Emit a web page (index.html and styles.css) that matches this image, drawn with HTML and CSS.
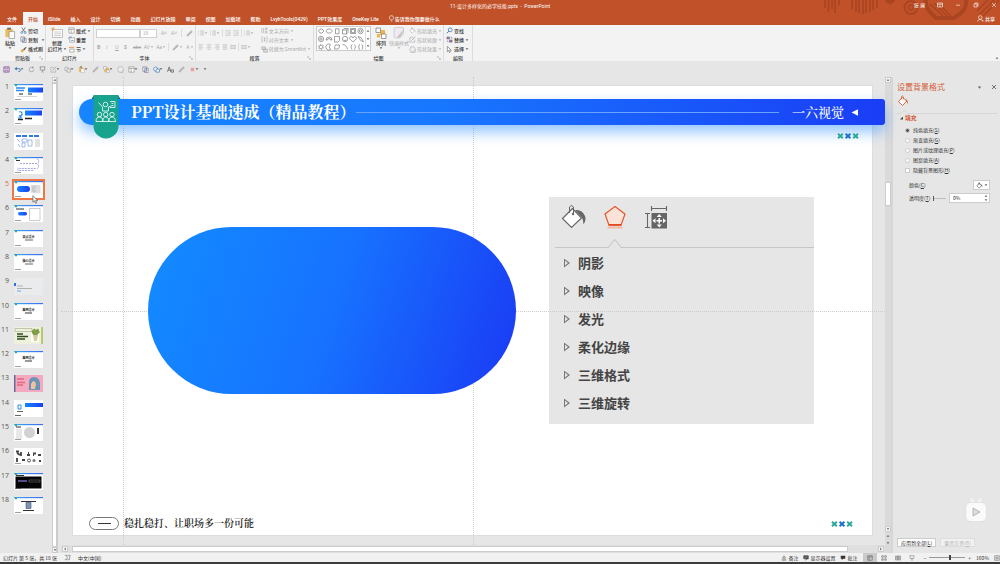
FILE: index.html
```html
<!DOCTYPE html>
<html lang="zh-CN">
<head>
<meta charset="utf-8">
<title>11-设计多样化的必学技能.pptx - PowerPoint</title>
<link rel="stylesheet" href="styles.css">
</head>
<body>
<svg class="defs" aria-hidden="true">
  <defs>
    <linearGradient id="blue" x1="0" y1="0" x2="1" y2="0"><stop offset="0" stop-color="#1685ff"/><stop offset="1" stop-color="#1a40f5"/></linearGradient>
    <linearGradient id="edge" x1="0" y1="0" x2="1" y2="0"><stop offset="0" stop-color="#3bb7b0"/><stop offset=".15" stop-color="#3a9bf5"/><stop offset="1" stop-color="#3f6fea"/></linearGradient>
    <symbol id="i-down" viewBox="0 0 4 4"><path d="M.6 1.2h2.8L2 2.9z" fill="currentColor"/></symbol>
    <symbol id="i-up" viewBox="0 0 4 4"><path d="M.6 2.8h2.8L2 1.1z" fill="currentColor"/></symbol>
    <symbol id="i-left" viewBox="0 0 4 4"><path d="M2.8.6v2.8L1.1 2z" fill="currentColor"/></symbol>
    <symbol id="i-right" viewBox="0 0 4 4"><path d="M1.2.6v2.8L2.9 2z" fill="currentColor"/></symbol>
    <symbol id="i-launch" viewBox="0 0 6 6"><path d="M1 3V1h2M2.5 2.5 5 5M5 3v2H3" fill="none" stroke="#888" stroke-width=".6"/></symbol>
    <symbol id="i-paste" viewBox="0 0 12 13"><path d="M1 2h8v9H1z" fill="#edbd62"/><path d="M3 .8h4v2H3z" fill="#666"/><path d="M5 5h6v7.5H5z" fill="#fff" stroke="#777" stroke-width=".6"/></symbol>
    <symbol id="i-cut" viewBox="0 0 8 8"><path d="M2 .5l3.2 5M6 .5l-3.2 5" stroke="#555" stroke-width=".8" fill="none"/><circle cx="2" cy="6.3" r="1.1" fill="none" stroke="#3c79b8" stroke-width=".8"/><circle cx="6" cy="6.3" r="1.1" fill="none" stroke="#3c79b8" stroke-width=".8"/></symbol>
    <symbol id="i-copy" viewBox="0 0 8 8"><path d="M1 1h4v5H1zM3 2.5h4v5H3z" fill="#fff" stroke="#557" stroke-width=".6"/><path d="M4 4h2M4 5.5h2" stroke="#3c79b8" stroke-width=".6"/></symbol>
    <symbol id="i-brush" viewBox="0 0 8 8"><path d="M1 4.5l2-1 1.5 2L3 7.5 1 6.5z" fill="#edaa4c"/><path d="M3.5 3.8L7 .8 7.4 1.6 4.8 5z" fill="#555"/></symbol>
    <symbol id="i-newslide" viewBox="0 0 12 12"><path d="M1.5 2.5h10v8h-10z" fill="#fff" stroke="#999" stroke-width=".6"/><path d="M3 5h7M3 6.8h7M3 8.6h7" stroke="#b9b9b9" stroke-width=".7"/><path d="M2 0v4M0 2h4" stroke="#e9a13b" stroke-width=".9"/></symbol>
    <symbol id="i-layout" viewBox="0 0 8 8"><path d="M1 1h6v6H1z" fill="#fff" stroke="#777" stroke-width=".6"/><path d="M1 2.8h6M3.6 2.8V7" stroke="#777" stroke-width=".6"/></symbol>
    <symbol id="i-reset" viewBox="0 0 8 8"><path d="M2 2h5.5v5H2z" fill="#fff" stroke="#777" stroke-width=".6"/><path d="M.5 3C1 1 3 .5 4.5 1.7M3.5 5h3" stroke="#3c79b8" stroke-width=".8" fill="none"/></symbol>
    <symbol id="i-section" viewBox="0 0 8 8"><path d="M1 1.5h6" stroke="#e08a3c" stroke-width="1"/><path d="M2 3.5h5v3.5H2z" fill="#fff" stroke="#777" stroke-width=".6"/></symbol>
    <symbol id="i-list" viewBox="0 0 8 8"><path d="M3 1.5h5M3 4h5M3 6.5h5M.3 1.5h1M.3 4h1M.3 6.5h1" stroke="#aaa" stroke-width=".8"/></symbol>
    <symbol id="i-align" viewBox="0 0 8 8"><path d="M1 1h6M1 3h4M1 5h6M1 7h4" stroke="#aaa" stroke-width=".7"/></symbol>
    <symbol id="i-center" viewBox="0 0 8 8"><path d="M1 1h6M2 3h4M1 5h6M2 7h4" stroke="#aaa" stroke-width=".7"/></symbol>
    <symbol id="i-ralign" viewBox="0 0 8 8"><path d="M1 1h6M3 3h4M1 5h6M3 7h4" stroke="#aaa" stroke-width=".7"/></symbol>
    <symbol id="i-just" viewBox="0 0 8 8"><path d="M1 1h6M1 3h6M1 5h6M1 7h6" stroke="#aaa" stroke-width=".7"/></symbol>
    <symbol id="i-dist" viewBox="0 0 8 8"><path d="M1 1v6M7 1v6M1.5 2h5M1.5 4h5M1.5 6h5" stroke="#aaa" stroke-width=".7"/></symbol>
    <symbol id="i-indent" viewBox="0 0 8 8"><path d="M.5 1h7M4 3h3.500M4 5h3.500M.5 7h7M.5 4h2.600" stroke="#aaa" stroke-width=".7"/></symbol>
    <symbol id="i-textdir" viewBox="0 0 8 8"><path d="M1 1v6M3 1v6M5 1h2v2H5zM5 5h2v2H5z" stroke="#aaa" stroke-width=".7" fill="none"/></symbol>
    <symbol id="i-textalign" viewBox="0 0 8 8"><path d="M2 1H1v6h1M6 1h1v6H6M4 1.500v5M3 3h2M3 5h2" stroke="#aaa" stroke-width=".7" fill="none"/></symbol>
    <symbol id="i-smart" viewBox="0 0 8 8"><path d="M1 1h4v3H1zM3 3.500h4.500V7H3z" stroke="#aaa" stroke-width=".8" fill="#ddd"/></symbol>
    <symbol id="i-arrange" viewBox="0 0 12 12"><path d="M5 3h5v5H5z" fill="#f0b54e"/><path d="M1 1h4.500v4.500H1zM6.500 7H11v4.500H6.500z" fill="#fff" stroke="#777" stroke-width=".7"/><path d="M2 7h3v3.500H2z" fill="#f0b54e"/></symbol>
    <symbol id="i-quick" viewBox="0 0 12 12"><path d="M1 2q0-1.500 1.500-1.500H9q1.500 0 1.500 1.500V7L7 11H2.500Q1 11 1 9.500z" fill="#eee9f2" stroke="#bbb" stroke-width=".6"/><path d="M11.500 2L6 8l-2 3 3.500-1.500z" fill="#bbb"/></symbol>
    <symbol id="i-bucket" viewBox="0 0 8 8"><path d="M3.500 1.500L1 4.500 3.700 7 6.500 4z" fill="#fff" stroke="currentColor" stroke-width=".6"/><path d="M3 3V1q.7-1 1.200 0v2" fill="none" stroke="currentColor" stroke-width=".5"/><path d="M5.500 2.700q2 .5 1.800 3.500L6.300 4z" fill="currentColor"/></symbol>
    <symbol id="i-outline" viewBox="0 0 8 8"><path d="M6.500 4v3H1V1.500h4" fill="none" stroke="#aaa" stroke-width=".7"/><path d="M3 5L7.300.8" stroke="#aaa" stroke-width="1"/></symbol>
    <symbol id="i-effect" viewBox="0 0 8 8"><path d="M2 1h4l1.300 3L5 7H2L.8 4z" fill="#eee" stroke="#aaa" stroke-width=".7"/><path d="M3 7.500h4L7.800 4" fill="none" stroke="#aaa" stroke-width=".6"/></symbol>
    <symbol id="i-find" viewBox="0 0 8 8"><circle cx="4.800" cy="3.200" r="2.200" fill="none" stroke="#3c79b8" stroke-width=".9"/><path d="M3.200 4.800L1 7.200" stroke="#3c79b8" stroke-width="1.100"/></symbol>
    <symbol id="i-replace" viewBox="0 0 8 8"><path d="M1 1h3v2.500H1zM4 4.500h3V7H4z" fill="#a97ab8" stroke="#555" stroke-width=".5"/><path d="M5 1.500h1.800v2M1.500 5v1.500H3" stroke="#3c79b8" stroke-width=".6" fill="none"/></symbol>
    <symbol id="i-cursor" viewBox="0 0 8 10"><path d="M1 .6v7.400l1.800-1.600 1.200 2.900 1.300-.6-1.200-2.700h2.400z" fill="#fff" stroke="#444" stroke-width=".7"/></symbol>
    <symbol id="i-save" viewBox="0 0 8 8"><path d="M1 1h6v6H1z" fill="none" stroke="#8a4f9e" stroke-width=".9"/><path d="M2.500 1v2.200h3V1M2.500 7V5h3v2" fill="none" stroke="#8a4f9e" stroke-width=".7"/></symbol>
    <symbol id="i-undo" viewBox="0 0 8 8"><path d="M2 3h3.500q1.700 0 1.700 1.800T5 6.500" fill="none" stroke="#3c79b8" stroke-width="1.100"/><path d="M3.200.8v4.400L.6 3z" fill="#3c79b8"/></symbol>
    <symbol id="i-redo" viewBox="0 0 8 8"><path d="M6.500 4A2.600 2.600 0 1 1 5 1.700" fill="none" stroke="#999" stroke-width=".8"/><path d="M4.500.3L7 1.600 4.800 3z" fill="#999"/></symbol>
    <symbol id="i-show" viewBox="0 0 8 8"><path d="M.8 1h6.400M1.500 1v3.700h5V1M4 4.700V6M2.600 7.300L4 6l1.400 1.300" fill="none" stroke="#777" stroke-width=".7"/></symbol>
    <symbol id="i-shapes" viewBox="0 0 8 8"><circle cx="3" cy="3.500" r="2.300" fill="none" stroke="#999" stroke-width=".7"/><path d="M3.500 3.500h3.800V7H3.500z" fill="#eee" stroke="#999" stroke-width=".7"/></symbol>
    <symbol id="i-shapesb" viewBox="0 0 8 8"><circle cx="3" cy="3.500" r="2.300" fill="#fff" stroke="#3c79b8" stroke-width=".8"/><path d="M3.500 3.500h3.800V7H3.500z" fill="#fff" stroke="#3c79b8" stroke-width=".8"/></symbol>
    <symbol id="i-pen" viewBox="0 0 8 8"><path d="M1 7l.7-2L6 .8 7.300 2 3 6.300z" fill="#bbb" stroke="#999" stroke-width=".5"/></symbol>
    <symbol id="i-people" viewBox="0 0 8 8"><circle cx="3.700" cy="2.800" r="2" fill="none" stroke="#fff" stroke-width=".7"/><path d="M.7 7.500Q1 5 3.700 5t3 2.500M5.500 6.500h2" fill="none" stroke="#fff" stroke-width=".7"/></symbol>
    <symbol id="i-xxx" viewBox="0 0 22 6"><g fill="none" stroke-width="1.900"><path d="M1 .7l4.800 4.600M5.800.7L1 5.300M16.200.7L21 5.300M21 .7l-4.800 4.600" stroke="#2aa79a"/><path d="M8.600.7l4.800 4.600M13.400.7L8.600 5.300" stroke="#1b6fd6"/></g></symbol>
    <symbol id="t-head" viewBox="0 0 29 17"><path d="M0 0h29v1.200H0z" fill="url(#edge)"/><path d="M1 .5h2v1.800H1z" fill="#2aa79a"/><path d="M1 15.500h6" stroke="#777" stroke-width=".7"/></symbol>
  </defs>
</svg>

<div class="app">
  <header class="top">
    <svg class="deco" viewBox="0 0 180 25" aria-hidden="true">
      <g stroke="#a94521" fill="none">
        <path d="M5 0v8M8.500 0v12M12 0v9M15 0v13M19 0v5M32 0v9M36 0v12M39 0v13M43 0v14M46 0v13M50 0v12M53 0v10M57 0v8" stroke-width="1.700"/>
        <circle cx="91" cy="7.500" r="6.500" stroke-width="2"/><circle cx="91" cy="7.500" r="2.500" stroke-width="1.500"/>
        <path d="M106 0q-1 8 6 14l4 4h18l7-5q6-6 5-13" stroke-width="4"/>
        <path d="M110 4l15 14M114 3l14 14M118 3l13 13M160 14l14-14M163 16l16-16M157 11l11-11" stroke-width="1.500"/>
      </g>
      <circle cx="70" cy="-1" r="5" fill="#a94521"/>
    </svg>
    <div class="titlebar">
      <span class="doc">11-设计多样化的必学技能.pptx&nbsp; -&nbsp; PowerPoint</span>
      <div class="winctl">
        <span>张 澜</span>
        <button aria-label="功能区显示选项"><svg viewBox="0 0 6 6"><path d="M.5 1h5v4h-5zM.5 2.200h5M3 2.500V5" fill="none" stroke="#fff" stroke-width=".6"/></svg></button>
        <button aria-label="最小化"><svg viewBox="0 0 6 6"><path d="M1 3.200h4" stroke="#fff" stroke-width=".6"/></svg></button>
        <button aria-label="还原"><svg viewBox="0 0 6 6"><path d="M1 2h3v3H1zM2 2V1h3v3H4" fill="none" stroke="#fff" stroke-width=".6"/></svg></button>
        <button aria-label="关闭"><svg viewBox="0 0 6 6"><path d="M1 1l4 4M5 1L1 5" stroke="#fff" stroke-width=".6"/></svg></button>
      </div>
    </div>
    <nav class="tabs">
      <button>文件</button><button class="on">开始</button><button>iSlide</button><button>插入</button><button>设计</button><button>切换</button><button>动画</button><button>幻灯片放映</button><button>审阅</button><button>视图</button><button>加载项</button><button>帮助</button><button>LvyhTools(0429)</button><button>PPT效果库</button><button>OneKey Lite</button>
      <button class="tell"><svg class="ic" viewBox="0 0 8 8"><path d="M3 5.500Q1.500 4.300 1.700 3a2.300 2.300 0 0 1 4.600 0Q6.500 4.300 5 5.500zM3 7h2" fill="none" stroke="#fff" stroke-width=".7"/></svg>告诉我你想要做什么</button>
      <button class="share"><svg class="ic"><use href="#i-people"/></svg>共享</button>
    </nav>
  </header>

  <section class="ribbon" aria-label="功能区">
    <div class="group g-clip">
      <div class="body">
        <button class="big"><svg><use href="#i-paste"/></svg><span>粘贴</span><svg class="dd"><use href="#i-down"/></svg></button>
        <div class="stack">
          <button><svg class="ic"><use href="#i-cut"/></svg>剪切</button>
          <button><svg class="ic"><use href="#i-copy"/></svg>复制<svg class="dd gap"><use href="#i-down"/></svg></button>
          <button><svg class="ic"><use href="#i-brush"/></svg>格式刷</button>
        </div>
      </div>
      <div class="cap">剪贴板<svg><use href="#i-launch"/></svg></div>
    </div>
    <div class="group g-slides">
      <div class="body">
        <button class="big"><svg><use href="#i-newslide"/></svg><span>新建</span><span>幻灯片<svg class="dd"><use href="#i-down"/></svg></span></button>
        <div class="stack">
          <button><svg class="ic"><use href="#i-layout"/></svg>版式<svg class="dd"><use href="#i-down"/></svg></button>
          <button><svg class="ic"><use href="#i-reset"/></svg>重置</button>
          <button><svg class="ic"><use href="#i-section"/></svg>节<svg class="dd"><use href="#i-down"/></svg></button>
        </div>
      </div>
      <div class="cap">幻灯片</div>
    </div>
    <div class="group g-font off">
      <div class="rows">
        <div class="row">
          <select class="fname" aria-label="字体"><option></option></select><select class="fsize" aria-label="字号"><option>18</option></select>
          <button class="lat">A˄</button><button class="lat">A˅</button><span class="sep"></span><button aria-label="清除格式"><svg class="ic"><use href="#i-pen"/></svg></button>
        </div>
        <div class="row wide">
          <button class="lat"><b>B</b></button><button class="lat"><i>I</i></button><button class="lat"><u>U</u></button><button class="lat"><b>S</b></button><button class="lat"><s>abc</s></button><button class="lat">AV<svg class="dd"><use href="#i-down"/></svg></button><button class="lat">Aa<svg class="dd"><use href="#i-down"/></svg></button><span class="sep"></span><button aria-label="突出显示"><svg class="ic"><use href="#i-pen"/></svg><svg class="dd"><use href="#i-down"/></svg></button><button class="lat">A<svg class="dd"><use href="#i-down"/></svg></button>
        </div>
      </div>
      <div class="cap">字体<svg><use href="#i-launch"/></svg></div>
    </div>
    <div class="group g-para off">
      <div class="body">
        <div class="rows">
          <div class="row icons">
            <button aria-label="项目符号"><svg class="ic"><use href="#i-list"/></svg><svg class="dd"><use href="#i-down"/></svg></button><button aria-label="编号"><svg class="ic"><use href="#i-list"/></svg><svg class="dd"><use href="#i-down"/></svg></button><span class="sep"></span><button aria-label="减少缩进"><svg class="ic"><use href="#i-indent"/></svg></button><button aria-label="增加缩进"><svg class="ic"><use href="#i-indent"/></svg></button><span class="sep"></span><button aria-label="行距"><svg class="ic"><use href="#i-list"/></svg><svg class="dd"><use href="#i-down"/></svg></button>
          </div>
          <div class="row icons">
            <button aria-label="左对齐"><svg class="ic"><use href="#i-align"/></svg></button><button aria-label="居中"><svg class="ic"><use href="#i-center"/></svg></button><button aria-label="右对齐"><svg class="ic"><use href="#i-ralign"/></svg></button><button aria-label="两端对齐"><svg class="ic"><use href="#i-just"/></svg></button><button aria-label="分散对齐"><svg class="ic"><use href="#i-dist"/></svg></button><span class="sep"></span><button aria-label="分栏"><svg class="ic"><use href="#i-dist"/></svg><svg class="dd"><use href="#i-down"/></svg></button>
          </div>
        </div>
        <div class="stack">
          <button><svg class="ic"><use href="#i-textdir"/></svg>文字方向<svg class="dd"><use href="#i-down"/></svg></button>
          <button><svg class="ic"><use href="#i-textalign"/></svg>对齐文本<svg class="dd"><use href="#i-down"/></svg></button>
          <button><svg class="ic"><use href="#i-smart"/></svg>转换为 SmartArt<svg class="dd"><use href="#i-down"/></svg></button>
        </div>
      </div>
      <div class="cap">段落<svg><use href="#i-launch"/></svg></div>
    </div>
    <div class="group g-draw">
      <div class="body">
        <div class="gallery">
          <svg viewBox="0 0 48 24" aria-label="形状">
            <g fill="#fff" stroke="#666" stroke-width=".6">
              <path d="M3 2h2l2 2-2 2H3L1.500 4zM10.500 2h3L15.500 4l-2 2h-3L9 4zM18.500 1.800h3.500v5h-3.500zM25.500 3l1.500-1.500h4V5.500L29.500 7h-4zM25.500 3h4v4M29.500 3L31 1.500M33.500 1.500h5v5h-5zM34.500 2.500h3v3h-3z"/>
              <circle cx="43.500" cy="4" r="2.700"/><circle cx="43.500" cy="4" r="1.200"/>
              <circle cx="4" cy="12" r="2.700"/><circle cx="4" cy="12" r="1.200"/><path d="M9 13a3 3 0 0 1 6 0h-1.500a1.500 1.500 0 0 0-3 0zM17.500 9.500h5v4l-1.500 1.500h-3.500z"/><circle cx="28" cy="12" r="2.700"/><path d="M26.500 13q1.500 1.300 3 0"/><path d="M36 14.800q-6-4-1.500-5.300Q36 10 36 11q0-1 1.500-1.500 4.500 1.300-1.500 5.300zM41 9.500l3 1 2.500 4.300-3-1.500z"/>
              <circle cx="4" cy="20" r="1.800"/><circle cx="4" cy="20" r="2.800" fill="none" stroke-dasharray=".7 1"/><path d="M13.500 17.500a3 3 0 1 0 0 5 3.500 3.500 0 0 1 0-5zM18.500 18h4q0 4-1.500 4h-3.500q0-3 1-4z"/><path d="M25.500 17.500q4 0 5 5M35 17.500q-2 2.500 0 5M37.500 17.500q2 2.500 0 5M43 17.500q-1.500 0-1.200 2.500-.3 2.500 1.200 2.500M44.500 17.500q1.500 0 1.200 2.500.3 2.500-1.200 2.500" fill="none"/>
            </g>
          </svg>
          <div class="gbtn"><button aria-label="上"><svg class="dd"><use href="#i-up"/></svg></button><button aria-label="下"><svg class="dd"><use href="#i-down"/></svg></button><button aria-label="更多"><svg class="dd"><use href="#i-down"/></svg></button></div>
        </div>
        <button class="big"><svg><use href="#i-arrange"/></svg><span>排列</span><svg class="dd"><use href="#i-down"/></svg></button>
        <button class="big off"><svg><use href="#i-quick"/></svg><span>快速样式</span><svg class="dd"><use href="#i-down"/></svg></button>
        <div class="stack off">
          <button><svg class="ic"><use href="#i-bucket"/></svg>形状填充<svg class="dd"><use href="#i-down"/></svg></button>
          <button><svg class="ic"><use href="#i-outline"/></svg>形状轮廓<svg class="dd"><use href="#i-down"/></svg></button>
          <button><svg class="ic"><use href="#i-effect"/></svg>形状效果<svg class="dd"><use href="#i-down"/></svg></button>
        </div>
      </div>
      <div class="cap">绘图<svg><use href="#i-launch"/></svg></div>
    </div>
    <div class="group g-edit">
      <div class="body">
        <div class="stack">
          <button><svg class="ic"><use href="#i-find"/></svg>查找</button>
          <button><svg class="ic"><use href="#i-replace"/></svg>替换<svg class="dd"><use href="#i-down"/></svg></button>
          <button><svg class="ic"><use href="#i-cursor"/></svg>选择<svg class="dd"><use href="#i-down"/></svg></button>
        </div>
      </div>
      <div class="cap">编辑</div>
    </div>
    <button class="collapse" aria-label="折叠功能区"><svg class="dd"><use href="#i-up"/></svg></button>
  </section>

  <div class="qat">
    <button aria-label="保存"><svg class="ic"><use href="#i-save"/></svg></button>
    <button aria-label="撤消"><svg class="ic"><use href="#i-undo"/></svg><svg class="dd"><use href="#i-down"/></svg></button>
    <button aria-label="重复"><svg class="ic"><use href="#i-redo"/></svg></button>
    <button aria-label="放映"><svg class="ic"><use href="#i-show"/></svg></button>
    <button aria-label="对齐"><svg class="ic"><use href="#i-outline"/></svg><svg class="dd"><use href="#i-down"/></svg></button>
    <button aria-label="合并形状"><svg class="ic"><use href="#i-shapes"/></svg><svg class="dd"><use href="#i-down"/></svg></button>
    <button aria-label="粘贴"><svg class="ic"><use href="#i-paste"/></svg><svg class="dd"><use href="#i-down"/></svg></button>
    <button aria-label="格式刷"><svg class="ic"><use href="#i-pen"/></svg></button>
    <button aria-label="排列"><svg class="ic"><use href="#i-arrange"/></svg><svg class="dd"><use href="#i-down"/></svg></button>
    <button aria-label="组合"><svg class="ic"><use href="#i-effect"/></svg></button>
    <button aria-label="图片"><svg class="ic"><use href="#i-layout"/></svg><svg class="dd"><use href="#i-down"/></svg></button>
    <button aria-label="文本框"><svg class="ic"><use href="#i-copy"/></svg></button>
    <button aria-label="形状"><svg class="ic"><use href="#i-shapesb"/></svg><svg class="dd"><use href="#i-down"/></svg></button>
    <button aria-label="字体"><svg class="ic" viewBox="0 0 8 8"><path d="M.5 6.500L2.500 1l2 5.500M1.200 4.700h2.600M4.500 4.500h3v2.500h-3z" fill="none" stroke="#555" stroke-width=".8"/></svg></button>
    <button aria-label="取色器"><svg class="ic"><use href="#i-pen"/></svg></button>
    <button aria-label="颜色"><svg class="ic" viewBox="0 0 8 8"><path d="M2 2h4v4H2z" fill="#eaa0a0"/></svg><svg class="dd"><use href="#i-down"/></svg></button>
    <button aria-label="自定义"><svg class="dd"><use href="#i-down"/></svg></button>
  </div>

  <main class="work">
    <ol class="thumbs">
      <li><span>1</span><svg viewBox="0 0 29 17"><use href="#t-head"/><path d="M14 3.500h15v5H14z" fill="url(#blue)"/><path d="M2 4h9M2 6.500h8" stroke="#2c8bf0" stroke-width="1.500"/><path d="M5 10h4M14 10h4" stroke="#222" stroke-width="1.200"/><path d="M3 12.500h20" stroke="#bbb" stroke-width=".6"/></svg></li>
      <li><span>2</span><svg viewBox="0 0 29 17"><use href="#t-head"/><path d="M11 2.500h17v5H11z" fill="url(#blue)"/><path d="M5 4q3-1 3 2 0 2-3 2 3 1 2 2H4" fill="none" stroke="#2c8bf0" stroke-width="1.200"/><path d="M4 11.500h5M11 10.500h7" stroke="#222" stroke-width="1.500"/></svg></li>
      <li><span>3</span><svg viewBox="0 0 29 17"><path d="M2 3h5M8 3h5M15 3h4M20 3h5" stroke="#3577dd" stroke-width="2"/><path d="M3 6l3 3M8 6h5v3H8zM14 7h4v6h-4zM4 11l2 3M8 10h3v4H8z" stroke="#89a9e6" fill="none" stroke-width=".8"/><path d="M21 6h5v8h-5z" fill="#e2e2e2"/></svg></li>
      <li><span>4</span><svg viewBox="0 0 29 17"><use href="#t-head"/><path d="M2 3.500h4" stroke="#333"/><path d="M6 6.500h18q2-4-1-4M24 7.500q2 4-2 4H6q-3-1-2 2h16" fill="none" stroke="#9b9bd8" stroke-width=".9" stroke-dasharray="2 1"/></svg></li>
      <li class="cur"><span>5</span><svg viewBox="0 0 29 17"><use href="#t-head"/><rect x="3" y="5" width="13" height="6" rx="3" fill="url(#blue)"/><path d="M17 4h9.500v8H17z" fill="#ddd"/><path d="M18 6h4M18 8h3M18 10h4" stroke="#aaa" stroke-width=".7"/></svg><svg class="mouse"><use href="#i-cursor"/></svg></li>
      <li><span>6</span><svg viewBox="0 0 29 17"><use href="#t-head"/><path d="M2 4h8" stroke="#333"/><rect x="4" y="7" width="9" height="3.500" rx="1.700" fill="url(#blue)"/><path d="M15.500 3.500H26v12H15.500z" fill="none" stroke="#999" stroke-width=".5"/></svg></li>
      <li><span>7</span><svg viewBox="0 0 29 17"><use href="#t-head"/><text x="14.500" y="8">亮点设计</text><path d="M11 10h8" stroke="#666"/></svg></li>
      <li><span>8</span><svg viewBox="0 0 29 17"><use href="#t-head"/><text x="14.500" y="8">核心设计</text><path d="M11 10h8" stroke="#666"/></svg></li>
      <li><span>9</span><svg viewBox="0 0 29 17"><path d="M0 0h29v17H0z" fill="#e9ebed"/><path d="M0 5h2v3H0z" fill="#2c6de0"/><path d="M3 8h6M3 10.500h15" stroke="#999" stroke-width=".7"/><path d="M3 13h4" stroke="#2c8bf0" stroke-width=".7"/></svg></li>
      <li><span>10</span><svg viewBox="0 0 29 17"><use href="#t-head"/><text x="14.500" y="8">案例设计</text><path d="M11 10h7" stroke="#333"/></svg></li>
      <li><span>11</span><svg viewBox="0 0 29 17"><path d="M0 0h29v17H0z" fill="#eef2dd"/><path d="M1 1.500h17v3H1z" fill="none" stroke="#aab09a" stroke-width=".7"/><path d="M3 7h6M3 9.500h11M3 12h8" stroke="#344a22" stroke-width="1.300"/><path d="M17 6h8v9h-8z" fill="#fff"/><path d="M18 6q-1-3 1-3 1-3 3 0 3-3 3 1 2 1-1 3l-1 2h-3z" fill="#7f9e48"/><path d="M19 8h5l-1 6h-3z" fill="#d8c99a"/><path d="M27 0h2v17h-2z" fill="#b5c96c"/></svg></li>
      <li><span>12</span><svg viewBox="0 0 29 17"><use href="#t-head"/><text x="14.500" y="8">案例设计</text><path d="M11 10h7" stroke="#333"/></svg></li>
      <li><span>13</span><svg viewBox="0 0 29 17"><path d="M0 0h29v17H0z" fill="#f3a9bf"/><path d="M0 0h1.500v17H0z" fill="#666c99"/><path d="M3 4h7M3 7.500h8M3 10h6" stroke="#e36680" stroke-width="1.300"/><path d="M15 15V8q0-6 5-6t6 6v7z" fill="#6b93b8"/><path d="M17 9q3-6 5 0l-1 5h-4z" fill="#f0c49a"/></svg></li>
      <li><span>14</span><svg viewBox="0 0 29 17"><path d="M11 3h18v4H11z" fill="url(#blue)"/><path d="M4 5h3v4H4z" fill="none" stroke="#2c8bf0"/><path d="M3 11.500h6M1 15.500h6" stroke="#666"/></svg></li>
      <li><span>15</span><svg viewBox="0 0 29 17"><use href="#t-head"/><path d="M2 3h5" stroke="#333"/><path d="M2 5h6v10H2z" fill="#e8e8e8"/><circle cx="15.500" cy="8.500" r="5.500" fill="#d2d2d2"/><path d="M24 4v6" stroke="#333" stroke-width="2"/></svg></li>
      <li><span>16</span><svg viewBox="0 0 29 17"><path d="M2 3.500h3M3 5l3 2M7 4v4M13 7h3M14 5h1M19 5.500h3M19 7h1M24 7h3M3 10v4M8 12h3M25 13h2" stroke="#444" stroke-width="1.800"/><circle cx="15" cy="12.500" r="1.500" fill="none" stroke="#555"/><circle cx="20" cy="12.500" r="1.500" fill="#777"/><path d="M1 15.500h6" stroke="#777" stroke-width=".7"/></svg></li>
      <li><span>17</span><svg viewBox="0 0 29 17"><use href="#t-head"/><path d="M1.500 3.500h26v12h-26z" fill="#050505"/><path d="M2 2.500h8" stroke="#333"/><path d="M4 8h9" stroke="#8c7de0" stroke-width="1.200"/><path d="M15 7h11v2H15z" fill="none" stroke="#888" stroke-width=".5"/></svg></li>
      <li><span>18</span><svg viewBox="0 0 29 17"><use href="#t-head"/><path d="M7 4.500h15M9 13.500h11" stroke="#333"/><path d="M12 5.500h5v6h-5z" fill="#7f93b5" stroke="#42506e" stroke-width=".6"/></svg></li>
    </ol>
    <div class="vbar left"><button aria-label="上"><svg class="dd"><use href="#i-up"/></svg></button><i class="hold"></i><button aria-label="下"><svg class="dd"><use href="#i-down"/></svg></button></div>

    <div class="stage">
      <div class="canvas">
        <div class="slide">
          <div class="banner">
            <h1>PPT设计基础速成（精品教程）</h1>
            <span class="rule"></span>
            <span class="brand">一六视觉</span>
            <svg class="tri" viewBox="0 0 7 7"><path d="M7 .3v6.400L.5 3.500z" fill="#fff"/></svg>
          </div>
          <svg class="badge" viewBox="0 0 30 44" aria-hidden="true">
            <path d="M.5 4L3 .3h24L29.500 4z" fill="#0b6357"/>
            <path d="M2.500.3h25V31a12.500 12.500 0 0 1-25 0z" fill="#18a38f"/>
            <g fill="none" stroke="#fff" stroke-width=".8"><circle cx="14.500" cy="9.500" r="2.300"/><path d="M7.500 7.500l4 4.500v4h6v-4l3-1M19 6.500h5v6h-5M20.500 8.500h2M20.500 10.500h2"/><circle cx="8.500" cy="19.500" r="2.200"/><circle cx="14.700" cy="19.500" r="2.200"/><circle cx="21" cy="19.500" r="2.200"/><path d="M5 26.500q0-4.500 3.500-4.500t3.300 4.500q0-4.500 3-4.500t3 4.500q0-4.500 3.200-4.500t3.500 4.500z"/></g>
          </svg>
          <svg class="xxx one"><use href="#i-xxx"/></svg>
          <div class="pill"></div>
          <section class="shot">
            <div class="shot-tabs">
              <svg viewBox="0 0 26 26"><path d="M11.500 4.500L1.500 14.500l9 9 10-9.500z" fill="#fff" stroke="#666" stroke-width="1.200"/><path d="M8.500 9V3q1.800-3 4 0v7" fill="none" stroke="#666"/><circle cx="12" cy="10" r="1.200" fill="#666"/><path d="M14 6q7-1 10 6 1.500 4-1.500 8.500Q22 13 19.500 12z" fill="#666"/></svg>
              <svg viewBox="0 0 26 26"><path d="M13 2.500l10 7.500-3.700 10.500H6.700L3 10z" fill="#fbe3da" stroke="#e2572f" stroke-width="1.200"/><path d="M6.500 21h13" stroke="#e24a1f" stroke-width="1.800"/><path d="M5.500 23.500h15" stroke="#f3b8a2" stroke-width="2"/></svg>
              <svg viewBox="0 0 26 26"><path d="M8 4.500h16M8.500 2v5M23.500 2v5M4.500 9v15M2 9.500h5M2 23.500h5" fill="none" stroke="#666" stroke-width="1.100"/><path d="M8.500 9h15.500v15.500H8.500z" fill="#666"/><path d="M16.200 10l2.500 3h-5zM16.200 23.500l2.500-3h-5zM9.500 16.700l3-2.500v5zM23 16.700l-3-2.500v5zM15.500 14h1.500v2h2v1.500h-2v2h-1.500v-2h-2V16h2z" fill="#fff"/></svg>
            </div>
            <svg class="notch" viewBox="0 0 258 9" preserveAspectRatio="xMinYMin slice"><path d="M0 8.500h53l6.500-8 6.500 8h260" fill="none" stroke="#c6c6c6"/></svg>
            <ul>
              <li>阴影</li><li>映像</li><li>发光</li><li>柔化边缘</li><li>三维格式</li><li>三维旋转</li>
            </ul>
          </section>
          <div class="foot"><span class="dash"></span>稳扎稳打、让职场多一份可能</div>
          <svg class="xxx two"><use href="#i-xxx"/></svg>
        </div>
        <i class="guide v1"></i><i class="guide v2"></i><i class="guide h1"></i>
      </div>
      <div class="hbar"><button aria-label="左"><svg class="dd"><use href="#i-left"/></svg></button><i class="hold"></i><button aria-label="右"><svg class="dd"><use href="#i-right"/></svg></button></div>
    </div>
    <div class="vbar right"><button aria-label="上"><svg class="dd"><use href="#i-up"/></svg></button><i class="space a"></i><i class="hold"></i><i class="space b"></i><button aria-label="下"><svg class="dd"><use href="#i-down"/></svg></button><button class="bare" aria-label="上一张"><svg class="dd"><use href="#i-up"/></svg></button><button class="bare" aria-label="下一张"><svg class="dd"><use href="#i-down"/></svg></button></div>

    <aside class="pane">
      <div class="pane-head"><h2>设置背景格式</h2><button aria-label="任务窗格选项"><svg class="dd big-dd"><use href="#i-down"/></svg></button><button aria-label="关闭"><svg class="x" viewBox="0 0 6 6"><path d="M1 1l4 4M5 1L1 5" stroke="#555" stroke-width=".8"/></svg></button></div>
      <svg class="pane-ic"><use href="#i-bucket"/></svg>
      <svg class="pane-line" viewBox="0 0 100 4" preserveAspectRatio="xMinYMin slice"><path d="M0 3.500h4L7 .5l3 3h200" fill="none" stroke="#cfcfcf" stroke-width=".7"/></svg>
      <h3>填充</h3>
      <div class="opts">
        <label><input type="radio" name="fill" checked>纯色填充(<u>S</u>)</label>
        <label><input type="radio" name="fill">渐变填充(<u>G</u>)</label>
        <label><input type="radio" name="fill">图片或纹理填充(<u>P</u>)</label>
        <label><input type="radio" name="fill">图案填充(<u>A</u>)</label>
        <label><input type="checkbox">隐藏背景图形(<u>H</u>)</label>
      </div>
      <div class="field"><span>颜色(<u>C</u>)</span><button class="color" aria-label="颜色"><svg class="ic"><use href="#i-bucket"/></svg><svg class="dd"><use href="#i-down"/></svg></button></div>
      <div class="field two"><label for="tr">透明度(<u>T</u>)</label><input type="range" value="0" aria-label="透明度滑块"><div class="spin"><input id="tr" type="text" value="0%"><span><svg class="dd"><use href="#i-up"/></svg><svg class="dd"><use href="#i-down"/></svg></span></div></div>
      <svg class="tv" viewBox="0 0 22 26" aria-hidden="true"><path d="M6 1l3 4M16 1l-3 4" stroke="#f4f4f4" stroke-width="2.500"/><rect x=".7" y="4.500" width="20.600" height="19" rx="5" fill="#fafafa" stroke="#d8d8d8" stroke-width=".6"/><path d="M8 10v8l7-4z" fill="#ddd" stroke="#aaa" stroke-width=".8"/></svg>
      <div class="actions"><button>应用到全部(<u>L</u>)</button><button disabled>重置背景(<u>B</u>)</button></div>
    </aside>
  </main>

  <footer class="status">
    <span>幻灯片 第 5 张，共 18 张</span>
    <svg class="ic" viewBox="0 0 8 8"><path d="M1 1.500h2.500v5H1M4.500 1.500H7L6 6.500H4.500" fill="none" stroke="#666" stroke-width=".7"/></svg>
    <span>中文(中国)</span>
    <div class="st-right">
      <button><svg class="ic" viewBox="0 0 8 8"><path d="M1 5.500h6M1 7h6M4 1l2 3H2z" fill="none" stroke="#555" stroke-width=".7"/></svg>备注</button>
      <button><svg class="ic" viewBox="0 0 8 8"><path d="M1 1h6v4H1zM3 7l4-3" fill="#666" stroke="#333" stroke-width=".8"/></svg>显示器设置</button>
      <button><svg class="ic" viewBox="0 0 8 8"><path d="M1 1h6v4H4L2.500 7V5H1z" fill="#333"/></svg>批注</button>
      <div class="views">
        <button class="on" aria-label="普通视图"><svg class="ic" viewBox="0 0 8 8"><path d="M1 1h6v6H1zM1 2.500h6M3 2.500V7" fill="none" stroke="#555" stroke-width=".7"/></svg></button>
        <button aria-label="幻灯片浏览"><svg class="ic" viewBox="0 0 8 8"><path d="M1 1h2v2H1zM5 1h2v2H5zM1 5h2v2H1zM5 5h2v2H5z" fill="none" stroke="#555" stroke-width=".7"/></svg></button>
        <button aria-label="阅读视图"><svg class="ic" viewBox="0 0 8 8"><path d="M.5 1.500H4v5H.5zM4 1.500h3.500v5H4zM1.500 3H3M5 3h1.500M1.500 4.500H3M5 4.500h1.500" fill="none" stroke="#555" stroke-width=".7"/></svg></button>
        <button aria-label="幻灯片放映"><svg class="ic"><use href="#i-show"/></svg></button>
      </div>
      <div class="zoom"><button aria-label="缩小">−</button><input type="range" value="58" aria-label="显示比例"><button aria-label="放大">+</button></div>
      <span class="pct">160%</span>
      <svg class="ic" viewBox="0 0 8 8"><path d="M1 1h6v6H1zM4 2v4M2 4h4" fill="none" stroke="#555" stroke-width=".7"/></svg>
    </div>
  </footer>
</div>
</body>
</html>
```

FILE: styles.css
```css
* { box-sizing: border-box; }
body { margin: 0; font: 5px/6px "Noto Sans CJK SC", sans-serif; color: #333; background: #e6e6e6; }
button, input, select { font: inherit; color: inherit; margin: 0; padding: 0; border: 0; background: none; white-space: nowrap; }
h1, h2, h3, ul, ol { margin: 0; padding: 0; font-weight: inherit; list-style: none; }
svg { display: block; flex: none; }
button { display: flex; align-items: center; }
.defs { position: absolute; width: 0; height: 0; }
.ic { width: 7px; height: 7px; }
.dd { width: 4px; height: 4px; color: #666; }
.gap { margin-left: 2px; }

.app { display: flex; flex-direction: column; height: 100vh; overflow: hidden; border-bottom: 2px solid #3c3c3c; }

/* title bar and tabs */
.top { position: relative; background: #c15129; color: #fff; }
.deco { position: absolute; right: 0; top: 0; width: 180px; height: 25px; }
.titlebar { position: relative; display: flex; justify-content: center; align-items: center; height: 11px; font-family: Roboto, "Noto Sans CJK SC", sans-serif; }
.winctl { position: absolute; right: 3px; top: 2px; display: flex; align-items: center; gap: 12px; }
.winctl svg { width: 6px; height: 6px; }
.tabs { position: relative; display: flex; height: 14px; padding: 1px 0 0 2px; font-family: Roboto, "Noto Sans CJK SC", sans-serif; font-weight: 500; }
.tabs button { padding: 0 5px; }
.tabs .on { background: #f3f3f3; color: #c15129; margin-left: 1px; }
.tabs .tell { padding-left: 4px; }
.tabs .share { margin-left: auto; gap: 1px; }

/* ribbon */
.ribbon { position: relative; display: flex; height: 36px; background: #f3f3f3; font-weight: 500; }
.group { display: flex; flex-direction: column; justify-content: space-between; border-right: 1px solid #dcdcdc; padding: 1px 2px 0; }
.g-clip { width: 46px; }
.g-slides { width: 48px; }
.g-font { width: 102px; }
.g-para { width: 118px; }
.g-draw { width: 130px; }
.g-edit { width: 29px; }
.off { color: #a8a8a8; font-weight: 400; }
.off .dd { color: #b5b5b5; }
.body { display: flex; gap: 2px; height: 28px; }
.big { flex-direction: column; min-width: 16px; padding-top: 1px; }
.big > svg:first-child { width: 12px; height: 12px; margin-bottom: 1px; }
.big span { display: flex; align-items: center; }
.stack { display: flex; flex-direction: column; justify-content: space-around; }
.stack button { gap: 1px; height: 9px; }
.cap { display: flex; justify-content: center; position: relative; color: #444; font-weight: 500; }
.cap svg { position: absolute; right: 0; top: 1px; width: 4px; height: 4px; }
.rows { display: flex; flex-direction: column; justify-content: space-around; height: 28px; }
.row { display: flex; align-items: center; gap: 4px; height: 10px; }
.row.wide { gap: 3px; padding-left: 1px; }
.row.wide .lat { min-width: 6px; }
.row.icons { gap: 2px; }
.g-para .rows { width: 64px; }
.row.icons .ic { width: 6px; height: 6px; }
.lat { font-family: "Open Sans", sans-serif; }
.sep { width: 1px; height: 8px; background: #dedede; }
.fname, .fsize { height: 9px; background: #fff; border: 1px solid #d0d0d0; appearance: none; padding: 0 2px; }
.fname { width: 50px; }
.fsize { width: 19px; margin-left: -4px; }
.gallery { display: flex; height: 25px; background: #fff; border: 1px solid #ccc; }
.gallery > svg { width: 48px; height: 24px; }
.gbtn { display: flex; flex-direction: column; border-left: 1px solid #ddd; }
.gbtn button { flex: 1; }
.collapse { position: absolute; right: 1px; bottom: 1px; }

.qat { display: flex; align-items: center; gap: 4px; height: 16px; padding-left: 3px; }
.qat .ic + .dd { margin-left: -1px; }

/* work area */
.work { flex: 1; display: flex; min-height: 0; }
.thumbs { width: 52px; display: flex; flex-direction: column; justify-content: space-between; padding: 7px 0 39px; }
.thumbs li { position: relative; display: flex; gap: 5px; height: 17px; align-items: flex-start; }
.thumbs span { width: 9px; text-align: right; font: 7px/5px "Open Sans", sans-serif; color: #555; }
.thumbs svg { width: 29px; height: 17px; background: #fff; }
.thumbs text { font: bold 3px "Noto Sans CJK SC", sans-serif; text-anchor: middle; fill: #111; }
.thumbs .cur svg { outline: 2px solid #ee7745; }
.thumbs .cur .mouse { position: absolute; left: 32px; top: 14px; width: 7px; height: 9px; background: none; outline: 0; z-index: 1; }
.thumbs .cur span { color: #dd6b42; }

.vbar { display: flex; flex-direction: column; width: 6px; background: #dadada; }
.vbar.left { margin-right: 3px; border-right: 1px solid #ccc; }
.vbar.right { padding-bottom: 7px; }
.vbar button, .hbar button { width: 6px; height: 6px; justify-content: center; background: #f6f6f6; border: 1px solid #ccc; }
.vbar.left button { width: 5px; }
.vbar .dd, .hbar .dd { margin: -1px; }
.vbar .bare { background: none; border: 0; margin-top: 1px; }
.hold { background: #fff; border: 1px solid #ccc; flex: 1; }
.right .hold { flex: 0 0 24px; }
.space.a { flex: 98; }
.space.b { flex: 318; }

.stage { flex: 1; display: flex; flex-direction: column; min-width: 0; }
.canvas { flex: 1; position: relative; padding: 9px 13px 0 12px; }
.slide { position: relative; aspect-ratio: 16 / 9; background: #fff; outline: 1px solid #ddd; font-family: "Noto Serif CJK SC", "Liberation Serif", "Noto Sans CJK SC", serif; }
.guide { position: absolute; }
.guide.v1, .guide.v2 { top: 0; bottom: 0; border-left: 1px dotted #ccc; }
.guide.v1 { left: 62px; }
.guide.v2 { left: 50%; }
.guide.h1 { left: 0; right: 0; top: 50%; border-top: 1px dotted #ccc; }
.hbar { display: flex; gap: 4px; height: 8px; padding: 1px 1px; background: #dfdfdf; }
.hbar .hold { margin-right: 26px; }

.banner { position: absolute; z-index: 1; left: 6px; right: -13px; top: 13px; display: flex; align-items: center; height: 26px; padding: 0 27px 0 52px; border-radius: 13px 3px 3px 13px; background: linear-gradient(90deg, #1685ff, #1877ff 45%, #1a3df5); box-shadow: 0 7px 14px rgba(60, 150, 255, .55); color: #fff; }
.banner h1 { font-size: 16px; line-height: 26px; font-weight: bold; white-space: nowrap; }
.rule { flex: 1; height: 1px; margin-right: 13px; background: #6aa3ff; }
.brand { font-size: 13px; line-height: 26px; font-weight: 500; }
.tri { width: 7px; height: 7px; margin-left: 7px; }
.badge { position: absolute; z-index: 1; left: 18px; top: 9px; width: 30px; height: 44px; }
.xxx { position: absolute; width: 22px; height: 6px; }
.xxx.one { z-index: 1; right: 13px; top: 47px; }
.xxx.two { right: 19px; bottom: 8px; }
.pill { position: absolute; z-index: 1; left: 75px; top: 141px; width: 368px; height: 167px; border-radius: 84px; background: linear-gradient(108deg, #1389ff 5%, #1772ff 50%, #1a3ef5 96%); }
.shot { position: absolute; left: 476px; top: 111px; width: 265px; padding: 7px 0 7px 6px; background: #e6e6e6; }
.shot-tabs { display: flex; gap: 15px; padding-left: 6px; }
.shot-tabs svg { width: 26px; height: 26px; }
.notch { width: 100%; height: 9px; margin: 9px 0 1px; }
.shot li { display: flex; align-items: center; gap: 8px; height: 28px; padding-left: 9px; font: bold 13px/28px "Noto Sans CJK SC", sans-serif; color: #444; }
.shot li::before { content: ""; width: 6px; height: 9px; background: linear-gradient(#777, #777); clip-path: polygon(0 0, 100% 50%, 0 100%, 0 0, 1px 2px, 1px 7px, 4px 50%, 1px 2px); }
.foot { position: absolute; left: 16px; bottom: 5px; display: flex; align-items: center; gap: 5px; font-size: 10px; line-height: 14px; font-weight: 600; color: #222; }
.dash { display: grid; place-items: center; width: 30px; height: 13px; border: 1px solid #777; border-radius: 7px; }
.dash::before { content: ""; width: 13px; height: 1px; background: #333; }

/* format pane */
.pane { width: 109px; padding: 5px 3px 6px 4px; display: flex; flex-direction: column; border-left: 2px solid #d6d6d6; }
.pane-head { display: flex; align-items: center; }
.pane h2 { flex: 1; font-size: 8px; line-height: 10px; color: #d35c38; }
.pane-head button { margin-left: 9px; }
.big-dd { width: 5px; height: 5px; }
.x { width: 6px; height: 6px; }
.pane-ic { width: 12px; height: 12px; margin-top: 3px; color: #d35c38; }
.pane-line { width: 100%; height: 4px; margin-top: 3px; }
.pane h3 { margin-top: 1px; display: flex; align-items: center; gap: 2px; font-weight: bold; color: #d35c38; padding-left: 3px; }
.pane h3::before { content: ""; width: 3px; height: 3px; background: #444; clip-path: polygon(100% 0, 100% 100%, 0 100%); }
.opts { display: grid; gap: 4px; padding: 6px 0 0 8px; }
.opts label { display: flex; align-items: center; }
.opts input { appearance: none; width: 5px; height: 5px; margin-right: 3px; background: #fff; border: 1px solid #ccc; border-radius: 3px; }
.opts input:checked { background: #555; border-color: #ccc; }
.opts input[type="checkbox"] { border-radius: 0; }
.field { display: flex; align-items: center; justify-content: space-between; padding: 0 7px 0 12px; margin-top: 7px; height: 10px; }
.color { width: 17px; height: 10px; justify-content: center; gap: 1px; background: #fff; border: 1px solid #ccc; }
.field.two { margin-top: 3px; gap: 3px; }
.field input[type="range"] { appearance: none; flex: 1; min-width: 0; height: 5px; background: linear-gradient(#bbb, #bbb) center / 100% 1px no-repeat; }
.field input[type="range"]::-webkit-slider-thumb { appearance: none; width: 1px; height: 5px; background: #555; }
.spin { display: flex; width: 41px; height: 10px; background: #fff; border: 1px solid #ccc; padding: 0 1px 0 3px; }
.spin input { flex: 1; min-width: 0; }
.tv { width: 22px; height: 26px; margin: auto 10px 14px auto; }
.actions { display: flex; gap: 4px; }
.actions button { height: 9px; padding: 0 3px; background: #fdfdfd; border: 1px solid #ccc; }
.actions button:disabled { color: #bbb; border-color: #ddd; background: #f1f1f1; }

/* status bar */
.status { display: flex; align-items: center; gap: 7px; height: 9px; padding-left: 3px; background: #f1f1f1; }
.st-right { margin-left: auto; display: flex; align-items: center; gap: 5px; }
.st-right .ic { width: 6px; height: 6px; }
.st-right > button { gap: 1px; }
.views { display: flex; }
.views button { width: 14px; height: 9px; justify-content: center; }
.views .on { background: #cacaca; }
.zoom { display: flex; align-items: center; gap: 3px; }
.zoom input { appearance: none; width: 36px; height: 5px; background: linear-gradient(#999, #999) center / 100% 1px no-repeat; }
.zoom input::-webkit-slider-thumb { appearance: none; width: 2px; height: 5px; background: #444; }
```
